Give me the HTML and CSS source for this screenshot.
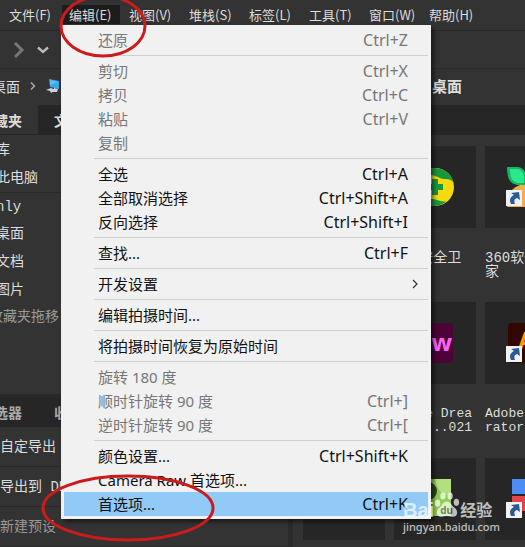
FILE: index.html
```
<!DOCTYPE html>
<html lang="zh-CN">
<head>
  <meta charset="UTF-8" />
  <meta name="viewport" content="width=device-width, initial-scale=1.0"/>
  <title>Bridge</title>
  <link rel="stylesheet" href="styles.css">
</head>
<body>
  <div class="app">
    <nav class="menubar">
      <button>文件(F)</button>
      <button class="open">编辑(E)</button>
      <button>视图(V)</button>
      <button>堆栈(S)</button>
      <button>标签(L)</button>
      <button>工具(T)</button>
      <button>窗口(W)</button>
      <button>帮助(H)</button>
    </nav>

    <div class="toolbar">
      <button aria-label="前进">
        <svg width="12" height="18" viewBox="0 0 12 18" fill="none"><path d="M2 2L9 9L2 16" stroke="#777" stroke-width="3"/></svg>
      </button>
      <button aria-label="历史">
        <svg width="12" height="8" viewBox="0 0 12 8" fill="none"><path d="M1 1.5L6 6L11 1.5" stroke="#bbb" stroke-width="2.4"/></svg>
      </button>
    </div>

    <div class="pathbar">
      <div class="crumbs">
        <a href="#">桌面</a>
        <svg width="6" height="8" viewBox="0 0 6 8" fill="none"><path d="M1 0.5L4.5 4L1 7.5" stroke="#aaa" stroke-width="1.5"/></svg>
        <svg width="16" height="14" viewBox="0 0 16 14">
          <path d="M3 0L13 2V10L4 8Z" fill="#3ba7e8"/>
          <path d="M4 1L12 3L4 6Z" fill="#5cc0f5"/>
          <path d="M0 11L5 9L10 11L5 14L4 12ZM8 9L12 10L11 13L7 13Z" fill="#c5d3da"/>
        </svg>
      </div>
      <h1>桌面</h1>
    </div>

    <div class="panels">
      <aside class="sidebar">
        <section class="favorites">
          <div class="tabs">
            <button class="tab active">收藏夹</button>
            <button class="tab">文件夹</button>
          </div>
          <ul class="places">
            <li>库</li>
            <li>此电脑</li>
            <li class="user">nly</li>
            <li>桌面</li>
            <li>文档</li>
            <li>图片</li>
          </ul>
          <p class="hint">收藏夹拖移</p>
        </section>
        <section class="export">
          <div class="tabs">
            <button class="tab">过滤选器</button>
            <button class="tab">收藏集</button>
          </div>
          <ul class="presets">
            <li>自定导出</li>
            <li>导出到 DNG</li>
            <li class="new">新建预设</li>
          </ul>
        </section>
      </aside>

      <main class="content">
        <div class="strip"></div>
        <div class="files">
          <figure></figure>
          <figure>
            <div class="thumb">
              <svg width="40" height="40" viewBox="0 0 40 40">
                <circle cx="20" cy="20" r="19" fill="#f9d90f"/>
                <path d="M2 15C5 3 18-3 30 4C35 7 38 12 38 15C34 10 29 14 23 10C15 6 8 8 2 15Z" fill="#17983f"/>
                <path d="M2 26C9 36 15 30 22 33C27 35 31 34 31 35C20 42 6 40 2 26Z" fill="#17983f"/>
                <path d="M17 12H23V17H28V23H23V28H17V23H12V17H17Z" fill="#17983f"/>
              </svg>
            </div>
            <figcaption>360安全卫士</figcaption>
          </figure>
          <figure>
            <div class="thumb">
              <svg width="40" height="40" viewBox="0 0 40 40">
                <circle cx="20" cy="36" r="19" fill="#f2ae4c"/>
                <path d="M1 0H12C19 1 21 7 20 18H12C4 17 1 12 1 0Z" fill="#12b868"/>
                <path d="M4 2H12C17 3 19 8 18 16H12C6 15 4 10 4 2Z" fill="#2be88a"/>
                <path d="M39 0H28C22 1 19 7 20 18H28C36 17 39 12 39 0Z" fill="#12b868"/>
                <use href="#shortcut" y="23"/>
              </svg>
            </div>
            <figcaption>360软件管家</figcaption>
          </figure>

          <figure></figure>
          <figure>
            <div class="thumb">
              <svg width="40" height="40" viewBox="0 0 40 40">
                <rect width="38" height="40" rx="4" fill="#4b0338"/>
                <text x="18" y="28" class="logo dw">Dw</text>
              </svg>
            </div>
            <figcaption class="latin">Adobe Dreamwea...021</figcaption>
          </figure>
          <figure>
            <div class="thumb">
              <svg width="40" height="40" viewBox="0 0 40 40">
                <rect x="2" width="38" height="40" rx="4" fill="#330600"/>
                <text x="24" y="26" class="logo ai">Ai</text>
                <use href="#shortcut" y="23"/>
              </svg>
            </div>
            <figcaption class="latin">Adobe Illu<br>rator 2021</figcaption>
          </figure>

          <figure><div class="thumb"></div></figure>
          <figure>
            <div class="thumb">
              <svg width="40" height="40" viewBox="0 0 40 40">
                <rect x="2" width="34" height="37" fill="#8fce54"/>
                <path d="M20 0H36V15C29 18 22 12 20 0Z" fill="#b3df81"/>
                <circle cx="13" cy="12" r="9" fill="#2a4a1c"/>
              </svg>
            </div>
          </figure>
          <figure>
            <div class="thumb">
              <svg width="40" height="40" viewBox="0 0 40 40">
                <path d="M6 0H20V15H6Z" fill="#4b8cf5"/>
                <path d="M6 17H20V32H6Z" fill="#e4444a"/>
                <path d="M22 0H36V15H22Z" fill="#4b8cf5"/>
                <use href="#shortcut" y="23"/>
              </svg>
            </div>
          </figure>
        </div>
      </main>
    </div>

    <!-- Edit menu -->
    <div class="menu" role="menu">
      <button class="item" disabled>还原<kbd>Ctrl+Z</kbd></button>
      <hr>
      <button class="item" disabled>剪切<kbd>Ctrl+X</kbd></button>
      <button class="item" disabled>拷贝<kbd>Ctrl+C</kbd></button>
      <button class="item" disabled>粘贴<kbd>Ctrl+V</kbd></button>
      <button class="item" disabled>复制</button>
      <hr>
      <button class="item">全选<kbd>Ctrl+A</kbd></button>
      <button class="item">全部取消选择<kbd>Ctrl+Shift+A</kbd></button>
      <button class="item">反向选择<kbd>Ctrl+Shift+I</kbd></button>
      <hr>
      <button class="item">查找...<kbd>Ctrl+F</kbd></button>
      <hr>
      <button class="item submenu">开发设置
        <svg width="6" height="10" viewBox="0 0 6 10" fill="none"><path d="M1 1L5 5L1 9" stroke="#333" stroke-width="1.2"/></svg>
      </button>
      <hr>
      <button class="item">编辑拍摄时间...</button>
      <hr>
      <button class="item">将拍摄时间恢复为原始时间</button>
      <hr>
      <button class="item" disabled>旋转 180 度</button>
      <button class="item" disabled>顺时针旋转 90 度<kbd>Ctrl+]</kbd></button>
      <button class="item" disabled>逆时针旋转 90 度<kbd>Ctrl+[</kbd></button>
      <hr>
      <button class="item">颜色设置...<kbd>Ctrl+Shift+K</kbd></button>
      <button class="item">Camera Raw 首选项...</button>
      <button class="item selected">首选项...<kbd>Ctrl+K</kbd></button>
    </div>

    <!-- red marks -->
    <svg class="mark mark-top" width="90" height="66" viewBox="0 0 90 66"><ellipse cx="45" cy="33" rx="42" ry="30"/></svg>
    <svg class="mark mark-bottom" width="176" height="70" viewBox="0 0 176 70"><ellipse cx="88" cy="35" rx="85" ry="32"/></svg>

    <div class="watermark">
      <div class="brand">
        <span class="bai">Bai</span>
        <svg width="26" height="30" viewBox="0 0 29 30">
          <ellipse cx="4" cy="13" rx="3" ry="4"/>
          <ellipse cx="10" cy="5" rx="3" ry="4"/>
          <ellipse cx="18" cy="5" rx="3" ry="4"/>
          <ellipse cx="25" cy="12" rx="3" ry="4"/>
          <path d="M14 11C18 11 20 16 24 19C28 24 25 29 20 28C16 27 12 27 9 28C4 29 1 24 5 19C9 16 10 11 14 11Z"/>
          <text x="14" y="25">du</text>
        </svg>
        <span class="jy">经验</span>
      </div>
      <div class="site">jingyan.baidu.com</div>
    </div>
  </div>

  <svg class="defs" width="0" height="0">
    <symbol id="shortcut" width="16" height="16" viewBox="0 0 16 16">
      <rect width="16" height="16" fill="#f2f2f2"/>
      <path d="M5 3L13 2L14 10L11 8C8 9 8 11 9 14H5C3 10 4 7 8 5Z" fill="#2a5a94"/>
    </symbol>
  </svg>
</body>
</html>
```
FILE: styles.css
```
:root {
  --panel: #333333;
  --dark: #262626;
  --line: #282828;
  --text: #dddddd;
  --muted: #999999;
  --menu: #f1f1f1;
  --highlight: #91c9f7;
  --red: #cc1b1b;
}

* {
  box-sizing: border-box;
  margin: 0;
  padding: 0;
}

body {
  font-family: "Liberation Mono", "Noto Sans CJK SC", monospace;
  font-size: 14px;
  background-color: var(--panel);
  color: var(--text);
}

button {
  background: none;
  border: none;
  color: inherit;
  font: inherit;
  text-align: left;
  white-space: nowrap;
}

ul {
  list-style: none;
}

svg {
  display: block;
  flex: none;
}

.app {
  position: relative;
  display: flex;
  flex-direction: column;
  height: 100vh;
  overflow: hidden;
}

.menubar {
  display: flex;
  gap: 2px;
  height: 31px;
  padding: 5px 0 6px 2px;
  border-bottom: 1px solid var(--line);
  font-family: "Noto Sans CJK SC", sans-serif;
  font-size: 13px;
}

.menubar button {
  flex: none;
  width: 58px;
  padding-left: 7px;
  line-height: 20px;
}

.menubar .open {
  background-color: #1c1c1c;
}

.toolbar {
  display: flex;
  align-items: center;
  gap: 12px;
  height: 38px;
  padding-left: 13px;
  border-bottom: 1px solid var(--line);
}

.pathbar {
  display: flex;
  align-items: center;
  height: 36px;
  padding-bottom: 2px;
}

.crumbs {
  display: flex;
  align-items: center;
  gap: 10px;
  width: 432px;
  margin-left: -8px;
}

.crumbs a {
  color: inherit;
  text-decoration: none;
}

.pathbar h1 {
  font-size: 15px;
  margin-left: 8px;
}

.panels {
  display: flex;
  flex: 1;
  min-height: 0;
}

.sidebar {
  display: flex;
  flex-direction: column;
  width: 293px;
  overflow: hidden;
  border-right: 5px solid #2b2b2b;
}

.favorites {
  height: 292px;
  border-bottom: 3px solid var(--line);
}

.tabs {
  display: flex;
  height: 30px;
  padding-bottom: 1px;
  background-color: var(--dark);
}

.tab {
  width: 96px;
  padding-left: 16px;
  font-weight: 700;
}

.tab:first-child {
  width: 58px;
  margin-left: -20px;
  padding: 0 16px 0 0;
  direction: rtl;
}

.tab.active {
  background-color: var(--panel);
}

.places {
  padding-top: 1px;
}

.places li {
  height: 28px;
  margin-left: -4px;
  line-height: 28px;
}

.places .user {
  border-top: 1px solid var(--line);
}

.hint {
  margin-left: -11px;
  color: var(--muted);
  line-height: 26px;
}

.export .tabs {
  color: #aaaaaa;
}

.presets li {
  height: 40px;
  border-bottom: 1px solid var(--line);
  line-height: 40px;
}

.presets .new {
  color: var(--muted);
}

.content {
  flex: 1;
  min-width: 0;
}

.strip {
  height: 30px;
  background-color: var(--dark);
}

.files {
  display: grid;
  grid-template-columns: repeat(3, 82px);
  grid-auto-rows: 156px;
  column-gap: 9px;
  padding: 11px 10px;
}

.thumb {
  display: flex;
  align-items: center;
  justify-content: center;
  height: 82px;
  margin-bottom: 23px;
  background-color: var(--dark);
}

figcaption {
  padding-right: 8px;
  line-height: 14px;
  word-break: break-all;
}

figcaption.latin {
  padding-right: 0;
  font-size: 13px;
}

.logo {
  font-family: "Open Sans", sans-serif;
  font-size: 24px;
  font-weight: 700;
  text-anchor: middle;
}

.dw {
  fill: #ff61f6;
}

.ai {
  fill: #ff9a00;
}

.menu {
  position: absolute;
  top: 25px;
  left: 61px;
  width: 370px;
  padding: 3px;
  background-color: var(--menu);
  box-shadow: 3px 3px 4px rgba(0, 0, 0, 0.5);
  color: #111111;
  font-family: "Noto Sans", "Noto Sans CJK SC", sans-serif;
  font-size: 15px;
}

.item {
  display: flex;
  align-items: center;
  justify-content: space-between;
  width: 100%;
  height: 24px;
  padding: 0 20px 1px 34px;
}

.item:disabled {
  color: #777777;
}

.item.selected {
  background-color: var(--highlight);
}

.item.submenu {
  padding-right: 10px;
}

.item kbd {
  font: inherit;
  font-size: 16px;
}

.menu hr {
  height: 1px;
  margin: 3px 0 3px 30px;
  border: none;
  background-color: #cfcfcf;
}

.mark {
  position: absolute;
  fill: none;
  stroke: var(--red);
  stroke-width: 3px;
}

.mark-top {
  top: -7px;
  left: 58px;
}

.mark-bottom {
  top: 473px;
  left: 40px;
}

.watermark {
  position: absolute;
  top: 492px;
  left: 403px;
  color: #ffffff;
  font-family: "Noto Sans", "Noto Sans CJK SC", sans-serif;
  opacity: 0.7;
}

.brand {
  display: flex;
  align-items: flex-end;
  height: 28px;
  line-height: 20px;
}

.brand svg {
  fill: #ffffff;
}

.brand text {
  fill: #666666;
  font-size: 11px;
  font-weight: 700;
  text-anchor: middle;
}

.bai {
  font-family: "Liberation Sans", sans-serif;
  font-size: 20px;
  font-weight: 700;
}

.jy {
  font-size: 16px;
  font-weight: 700;
}

.site {
  font-size: 11px;
  font-weight: 500;
  line-height: 14px;
}

.defs {
  position: absolute;
}
```
